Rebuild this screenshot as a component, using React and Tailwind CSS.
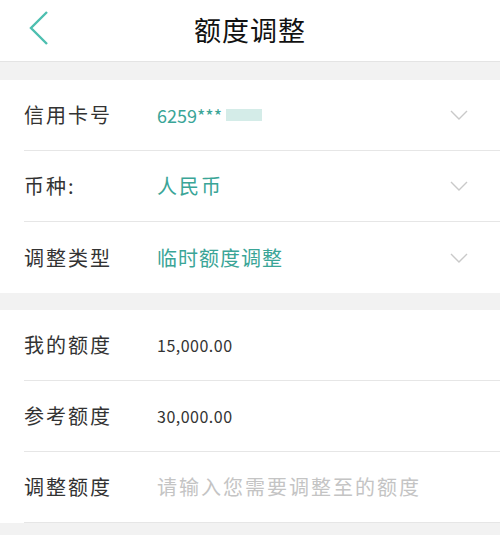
import React from 'react'

const font = { fontFamily: '"Noto Sans CJK SC", "Noto Sans", sans-serif' }

const Chevron = () => (
  <svg width="18" height="10" viewBox="0 0 18 10" fill="none" className="shrink-0">
    <path d="M1 1l8 8 8-8" stroke="#c9c9c9" strokeWidth="1.4" />
  </svg>
)

const Row = ({ label, value, valueClass, chevron, last }) => (
  <div className="pl-6">
    <div className={`flex h-[71px] items-center pr-8 ${last ? '' : 'border-b border-[#e6e6e6]'}`}>
      <div className="w-[133px] shrink-0 text-[20px] tracking-[2px] text-[#333]">{label}</div>
      <div className={`flex-1 ${valueClass}`}>{value}</div>
      {chevron && <Chevron />}
    </div>
  </div>
)

export default function App() {
  return (
    <div className="w-[500px] h-[535px] bg-[#f2f2f2] overflow-hidden" style={font}>
      {/* Header */}
      <div className="relative flex h-[62px] items-center justify-center bg-white border-b border-[#e4e4e4]">
        <svg width="22" height="36" viewBox="0 0 22 36" fill="none" className="absolute left-[28px] top-[10px]">
          <path d="M19 2L3 18l16 16" stroke="#4dbfb0" strokeWidth="2.4" />
        </svg>
        <div className="text-[27px] tracking-[1px] text-[#111]">额度调整</div>
      </div>

      <div className="h-[18px]" />

      <div className="bg-white">
        <Row
          label="信用卡号"
          valueClass="text-[18px] text-[#3aa597]"
          value={
            <span className="flex items-center">
              6259***
              <span className="ml-1 inline-block h-[12px] w-[36px] bg-[#d4ece8]" />
            </span>
          }
          chevron
        />
        <Row label="币种:" value="人民币" valueClass="text-[20px] tracking-[2px] text-[#3aa597]" chevron />
        <Row label="调整类型" value="临时额度调整" valueClass="text-[20px] tracking-[1px] text-[#3aa597]" chevron last />
      </div>

      <div className="h-[17px]" />

      <div className="bg-white">
        <Row label="我的额度" value="15,000.00" valueClass="text-[16px] tracking-[0.5px] text-[#333]" />
        <Row label="参考额度" value="30,000.00" valueClass="text-[16px] tracking-[0.5px] text-[#333]" />
        <Row label="调整额度" value="请输入您需要调整至的额度" valueClass="text-[20px] tracking-[2px] text-[#c4c4c4]" />
      </div>
    </div>
  )
}
